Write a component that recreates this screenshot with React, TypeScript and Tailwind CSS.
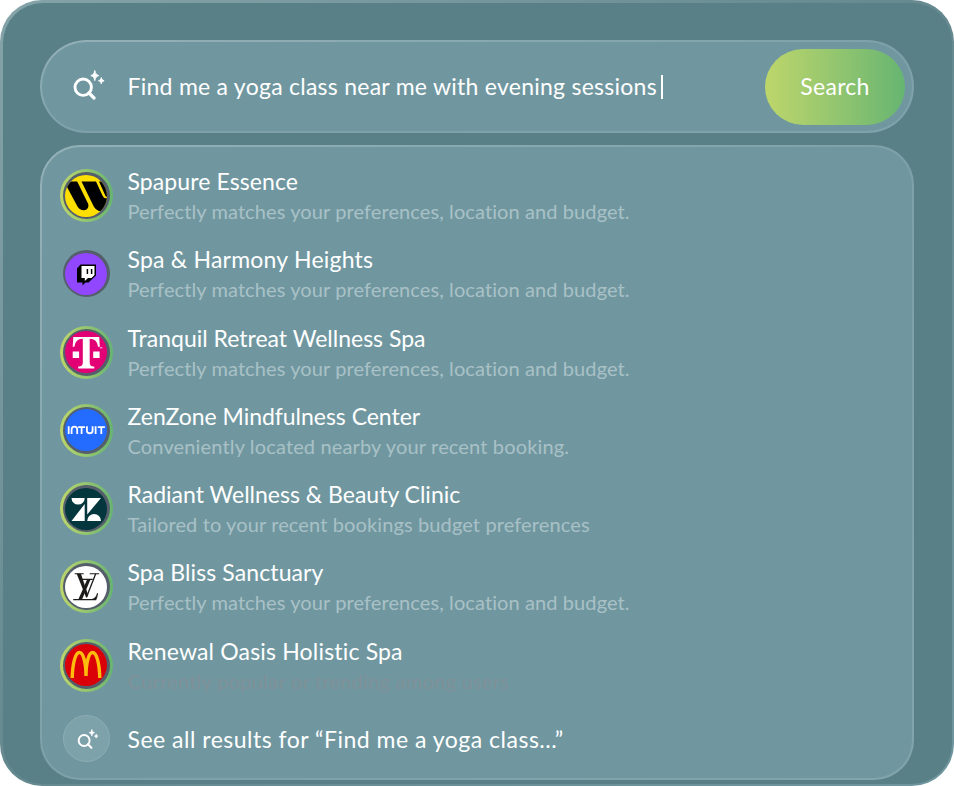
import React from "react";

type Logo = "warner" | "twitch" | "telekom" | "intuit" | "zendesk" | "vuitton" | "mcd";

interface Result {
  title: string;
  titleClass: string;
  note: string;
  noteClass: string;
  logo: Logo;
  ring: boolean;
}

const results: Result[] = [
  { title: "Spapure Essence", titleClass: "tracking-[0.1px]", note: "Perfectly matches your preferences, location and budget.", noteClass: "tracking-[0.1px] text-[#a9c1c6]", logo: "warner", ring: true },
  { title: "Spa & Harmony Heights", titleClass: "tracking-[0.22px]", note: "Perfectly matches your preferences, location and budget.", noteClass: "tracking-[0.1px] text-[#a9c1c6]", logo: "twitch", ring: false },
  { title: "Tranquil Retreat Wellness Spa", titleClass: "tracking-[0px]", note: "Perfectly matches your preferences, location and budget.", noteClass: "tracking-[0.1px] text-[#a9c1c6]", logo: "telekom", ring: true },
  { title: "ZenZone Mindfulness Center", titleClass: "tracking-[-0.03px]", note: "Conveniently located nearby your recent booking.", noteClass: "tracking-[0.15px] text-[#a9c1c6]", logo: "intuit", ring: true },
  { title: "Radiant Wellness & Beauty Clinic", titleClass: "tracking-[0px]", note: "Tailored to your recent bookings budget preferences", noteClass: "tracking-[0.12px] text-[#a9c1c6]", logo: "zendesk", ring: true },
  { title: "Spa Bliss Sanctuary", titleClass: "tracking-[0.1px]", note: "Perfectly matches your preferences, location and budget.", noteClass: "tracking-[0.1px] text-[#a9c1c6]", logo: "vuitton", ring: true },
  { title: "Renewal Oasis Holistic Spa", titleClass: "tracking-[0.18px]", note: "Currently popular or trending among users", noteClass: "tracking-[0.26px] text-[#7f9098]", logo: "mcd", ring: true },
];

function SearchSpark({ className }: { className: string }) {
  return (
    <svg viewBox="0 0 32 30" className={className} fill="none">
      <circle cx="10.2" cy="17.2" r="8.2" stroke="white" strokeWidth="2.9" />
      <path d="M16 23l5 5" stroke="white" strokeWidth="3.2" strokeLinecap="round" />
      <path d="M21.800 .5c.7 3.200 1.300 4 4 5.100-2.700 1.100-3.300 1.900-4 5.100-.7-3.200-1.300-4-4-5.100 2.700-1.100 3.300-1.900 4-5.100z" fill="white" stroke="white" strokeWidth=".9" strokeLinejoin="round" />
      <path d="M28.300 7.600c.5 2 .9 2.400 2.800 3.100-1.900.7-2.300 1.100-2.800 3.100-.5-2-.9-2.400-2.800-3.100 1.900-.7 2.300-1.100 2.800-3.100z" fill="white" stroke="white" strokeWidth="1" strokeLinejoin="round" />
    </svg>
  );
}

function LogoMark({ logo }: { logo: Logo }) {
  const cls = "block size-[42px] rounded-full";
  switch (logo) {
    case "warner":
      return (
        <svg viewBox="0 0 42 42" className={cls}>
          <rect width="42" height="42" fill="#ffdf00" />
          <path d="M-1 6.500H12.200L23 28.500C24.500 32.500 22 35.300 18.800 35.300C16 35.300 14 34 12.500 31.500Z" fill="#000" />
          <path d="M16.500 6.500H31L36.500 18.500C38 22 39.500 24 42 23V36H34C31.500 35 29.500 33 28.500 31Z" fill="#000" />
          <path d="M34 6.500H42V22L40.500 21Z" fill="#000" />
        </svg>
      );
    case "twitch":
      return (
        <svg viewBox="0 0 42 42" className={cls}>
          <rect width="42" height="42" fill="#9146ff" />
          <path d="M15.500 11.500H31V22.500L23.500 29.500H20.500L17.500 32.500V29.500H12V15.500Z" fill="#000" />
          <path d="M16.500 13H29.500V22L26.500 25H23L19.800 28V25H16.500Z" fill="#fff" />
          <path d="M22.400 16v5M26.600 16v5" stroke="#000" strokeWidth="1.500" />
        </svg>
      );
    case "telekom":
      return (
        <svg viewBox="0 0 42 42" className={cls}>
          <rect width="42" height="42" fill="#e20074" />
          <path d="M8.300 6H34.200L34.800 15.800H33C32.300 10.500 29.800 8 24.700 7.800V31C24.700 34.500 26 35.500 29.300 35.500V37.500H13.200V35.500C16.500 35.500 17.800 34.500 17.800 31V7.800C12.700 8 10.200 10.500 9.500 15.800H7.700Z" fill="#fff" />
          <path d="M7.700 20.500H14.100V26.900H7.700ZM28.200 20.500H34.600V26.900H28.200Z" fill="#fff" />
          <path d="M34.800 16.800h2.700" stroke="#fff" strokeWidth=".8" />
        </svg>
      );
    case "intuit":
      return (
        <svg viewBox="0 0 42 42" className={cls} fill="none">
          <rect width="42" height="42" fill="#236cff" />
          <g stroke="#fff" strokeWidth="1.800" transform="translate(.7 .2)">
            <path d="M3 17v7.800M5.900 24.800V20.300a2.800 2.800 0 0 1 5.600 0V24.800M12.500 17.900H19.300M15.900 17.900V24.800M21.200 17V21.200a2.850 2.850 0 0 0 5.700 0V17M29.900 17V24.800M32 17.900H39.200M35.600 17.900V24.800" />
          </g>
        </svg>
      );
    case "zendesk":
      return (
        <svg viewBox="0 0 42 42" className={cls}>
          <rect width="42" height="42" fill="#03363d" />
          <path d="M6.500 10H19.700A6.600 6.600 0 0 1 6.500 10ZM19.700 16V33H6.500ZM22.200 10H36L22.200 26.500ZM22.200 33A6.900 6.900 0 0 1 36 33Z" fill="#fff" />
        </svg>
      );
    case "vuitton":
      return (
        <svg viewBox="0 0 42 42" className={cls} fill="none">
          <rect width="42" height="42" fill="#fff" />
          <g transform="translate(-.3 -1.200)">
            <path d="M10 9H19M25 9H34.500" stroke="#1d1b1a" strokeWidth="1.100" />
            <path d="M12 9H16.200L23.500 30.500L21.500 33Z" fill="#1d1b1a" />
            <path d="M31 9L21.800 32.500" stroke="#1d1b1a" strokeWidth="1.300" />
            <path d="M17 14.500H28M8.500 34.800H31C32 33 32.500 31 32.800 28.500" stroke="#1d1b1a" strokeWidth="1.200" />
            <path d="M22.300 15H25.700L17.200 35H13.500Z" fill="#1d1b1a" />
            <path d="M25 35C29.500 34 31.500 32 32.800 28.500L31 35.300Z" fill="#1d1b1a" />
          </g>
        </svg>
      );
    case "mcd":
      return (
        <svg viewBox="0 0 42 42" className={cls} fill="none">
          <rect width="42" height="42" fill="#db0007" />
          <path d="M7.200 34C7.500 20.500 10.200 8.500 14.400 8.500C18.200 8.500 21 18.500 21 32C21 18.500 23.800 8.500 27.600 8.500C31.800 8.500 34.500 20.500 34.800 34" stroke="#ffbc0d" strokeWidth="3.400" />
        </svg>
      );
  }
}

function Avatar({ logo, ring }: { logo: Logo; ring: boolean }) {
  return (
    <div
      className={
        ring
          ? "flex size-[53px] shrink-0 items-center justify-center rounded-full bg-linear-to-r from-[#bdd66b] to-[#66b571]"
          : "flex size-[53px] shrink-0 items-center justify-center rounded-full"
      }
    >
      <div className="flex size-[47px] items-center justify-center rounded-full bg-[#555e6b]">
        <LogoMark logo={logo} />
      </div>
    </div>
  );
}

export default function App() {
  return (
    <div className="h-[786px] w-[954px] overflow-hidden bg-white font-['Lato','Liberation_Sans',sans-serif] text-[23px] text-white">
      <div className="h-full rounded-[42px] bg-linear-to-br from-[#84a3a9] via-[#65898f] to-[#6f969f] p-[2.500px]">
        <main className="flex h-full flex-col gap-3 rounded-[40px] bg-[#5a8087] px-[37.500px] pt-[37.500px]">
          <div className="h-[93px] shrink-0 rounded-full bg-linear-to-br from-[#93b1b7] via-[#7ea1a9] to-[#7fa3aa] p-[2px]">
            <div className="flex h-full items-center rounded-full bg-[#7097a0] pr-[7px] pl-[31px]">
              <SearchSpark className="mb-[3px] h-[30px] w-8 shrink-0" />
              <div className="ml-[22.500px] flex flex-1 items-center whitespace-nowrap">
                <span className="tracking-[0.26px]">Find me a yoga class near me with evening sessions</span>
                <span className="ml-1 h-6 w-[2.500px] bg-white" />
              </div>
              <button className="h-[76px] w-[140px] rounded-full bg-linear-to-r from-[#bdd66b] to-[#66b571] tracking-[0.3px]">Search</button>
            </div>
          </div>

          <div className="h-[635px] shrink-0 rounded-[40px] bg-linear-to-br from-[#93b1b7] via-[#7ea1a9] to-[#82a5ac] p-[2px]">
            <section className="flex h-full flex-col rounded-[38px] bg-[#7097a0] pt-[9.500px] pl-[17.500px]">
              {results.map((r) => (
                <div key={r.logo} className="flex h-[78.250px] shrink-0 items-center whitespace-nowrap">
                  <Avatar logo={r.logo} ring={r.ring} />
                  <div className="ml-[15px] pt-px">
                    <div className={"h-[30px] text-[23px] leading-[30px] " + r.titleClass}>{r.title}</div>
                    <div className={"h-[30px] text-[20px] leading-[30px] " + r.noteClass}>{r.note}</div>
                  </div>
                </div>
              ))}
              <div className="flex h-[69px] shrink-0 items-center pl-[3px]">
                <div className="flex size-[47px] items-center justify-center rounded-full border border-[#8eacb3] bg-[#7da2aa]">
                  <SearchSpark className="ml-[3px] h-5 w-[22px]" />
                </div>
                <span className="ml-[18px] tracking-[0.5px]">See all results for “Find me a yoga class...”</span>
              </div>
            </section>
          </div>
        </main>
      </div>
    </div>
  );
}
